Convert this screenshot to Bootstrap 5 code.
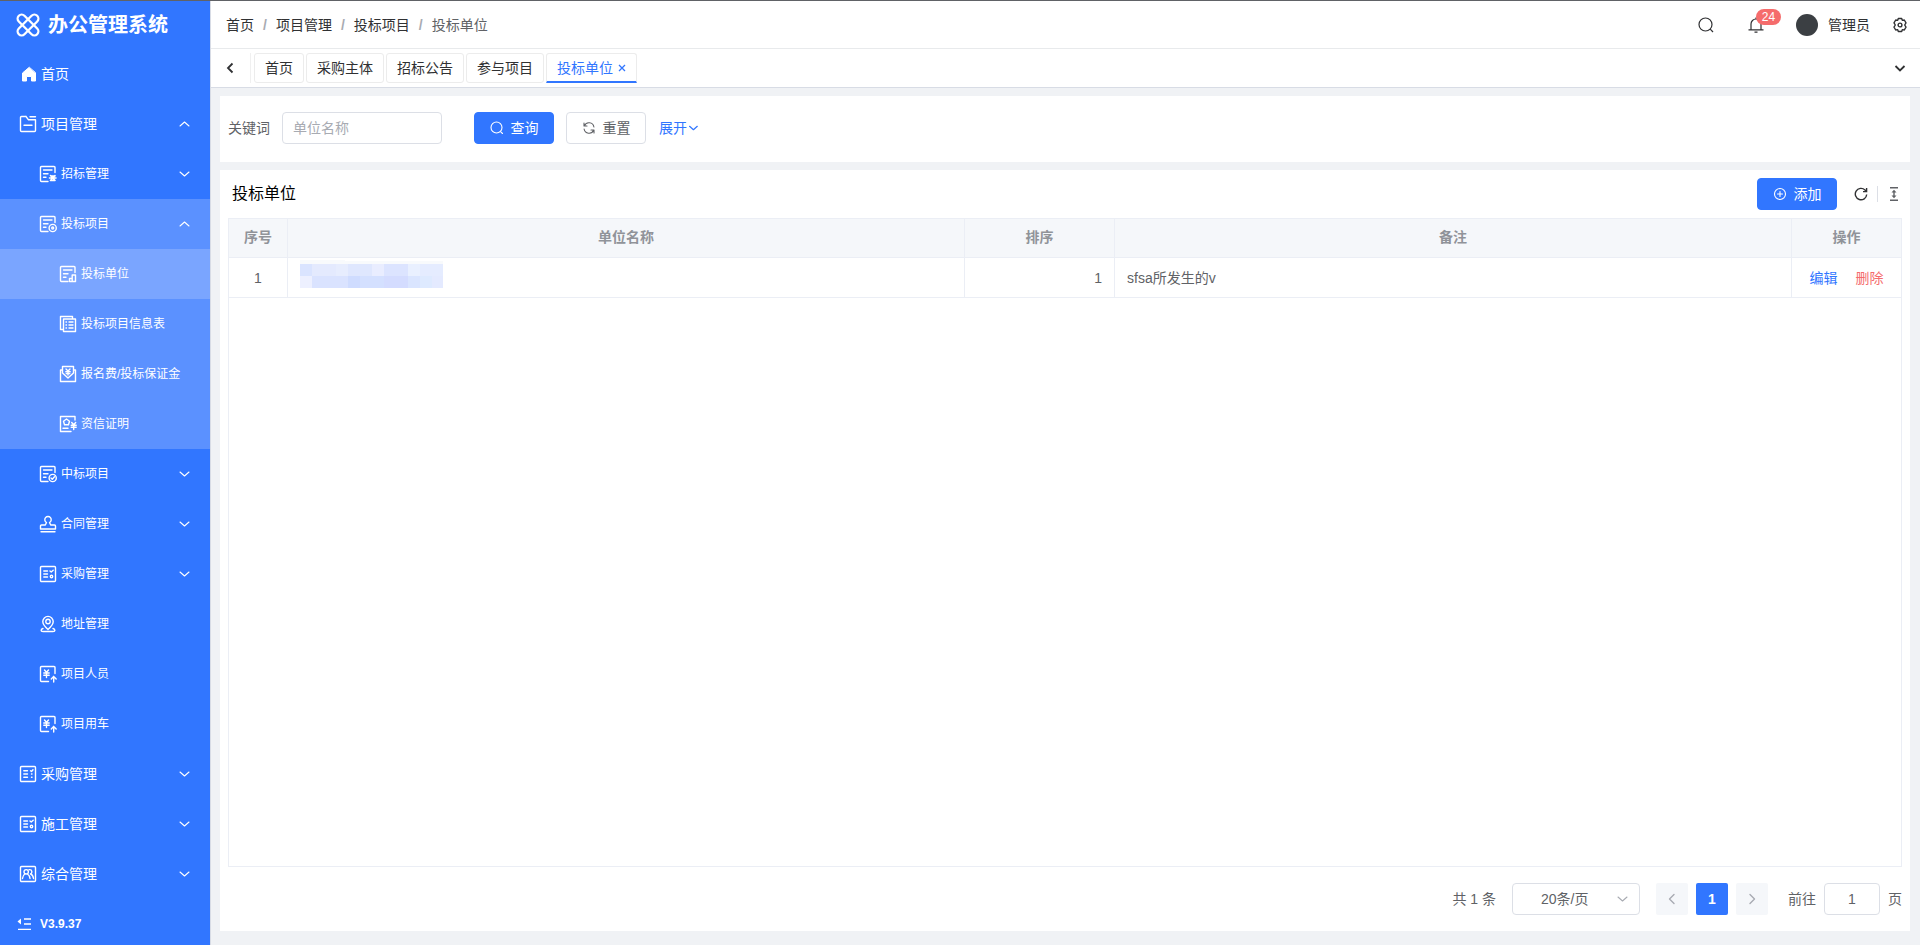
<!DOCTYPE html>
<html lang="zh-CN">
<head>
<meta charset="utf-8">
<meta name="viewport" content="width=device-width, initial-scale=1">
<title>办公管理系统</title>
<link rel="stylesheet" href="https://cdn.jsdelivr.net/npm/bootstrap@5.3.0/dist/css/bootstrap.min.css">
<style>
:root { --brand: #3176ff; --line: #ebeef5; --ink: #303133; --text: #606266; --field: #dcdfe6; }
body { font-family: "Liberation Sans", "Noto Sans CJK SC", sans-serif; font-size: 14px; line-height: 20px; color: var(--text); background: #f0f2f5; border-top: 1px solid #606266; }
a { text-decoration: none; }
svg { display: block; flex: none; }
.ico { width: 18px; height: 18px; fill: none; stroke: currentColor; stroke-width: 1.4; stroke-linecap: round; stroke-linejoin: round; }
.ico-sm { width: 14px; height: 14px; stroke-width: 1.1; }
.app { min-height: calc(100vh - 1px); }
.sidebar { width: 211px; background: var(--brand); border-right: 1px solid #d8dce5; color: #fff; }
.sidebar a { color: #fff; height: 50px; gap: 4px; padding: 0 19px; }
.brand-row { height: 48px; padding: 0 16px; gap: 8px; }
.brand-row h1 { font-size: 20px; line-height: 24px; }
.sidebar ul ul a { padding-left: 39px; font-size: 12px; }
.sidebar ul ul ul a { padding-left: 59px; }
.branch-open { background: #5b91ff; }
.sidebar a.current { background: #7aa5ff; }
.version { font-size: 12px; height: 46px; padding: 4px 17px 0; gap: 9px; font-weight: bold; }
.topbar { height: 48px; padding: 0 15px; border-bottom: 1px solid #e8eaec; color: var(--ink); }
.breadcrumb { --bs-breadcrumb-item-padding-x: 9px; --bs-breadcrumb-divider-color: #a8abb2; --bs-breadcrumb-item-active-color: #606266; font-size: 14px; }
.breadcrumb a, .topbar button { color: var(--ink); }
.breadcrumb-item + .breadcrumb-item::before { font-weight: bold; }
.plain { border: 0; background: none; padding: 0; color: inherit; }
.notify { margin-left: 34px; }
.settings { margin-left: 22px; margin-right: -3px; }
.count { top: -8px; left: 8px; height: 16px; min-width: 25px; border-radius: 8px; background: #f56c6c; font-size: 12px; line-height: 16px; color: #fff; text-align: center; }
.avatar { width: 22px; height: 22px; border-radius: 50%; background: #3b3f43; margin-left: 32px; margin-right: 10px; }
.tabbar { height: 39px; border-bottom: 1px solid #d8dce5; padding: 0 14px 0 13px; color: var(--ink); }
.tab-edge { width: 1px; height: 30px; background: #f0f0f0; margin-left: 14px; margin-right: 3px; }
.tab-list { gap: 2px; }
.tabbar a { height: 30px; padding: 0 10px; border: 1px solid #ececec; border-radius: 3px; color: var(--ink); line-height: 28px; }
.tabbar a.current { color: var(--brand); border-bottom: 2px solid var(--brand); border-radius: 3px 3px 0 0; gap: 5px; }
.page-main { padding: 8px 10px 14px 9px; gap: 8px; }
.search-panel { padding: 16px 8px 18px; }
.box { height: 32px; border: 1px solid var(--field); border-radius: 4px; color: var(--text); background: #fff; font-size: 14px; line-height: 20px; }
input.box::placeholder { color: #a8abb2; }
.keyword { width: 160px; padding: 0 10px; margin-left: 12px; margin-right: 32px; }
.act { width: 80px; height: 32px; padding: 0; border-radius: 4px; font-size: 14px; gap: 7px; }
.act-brand { --bs-btn-bg: #3176ff; --bs-btn-border-color: #3176ff; }
.act-light { --bs-btn-bg: #fff; --bs-btn-border-color: #dcdfe6; --bs-btn-color: #606266; margin-left: 12px; margin-right: 13px; }
.link-brand { color: var(--brand); }
.more { width: 12px; height: 12px; }
.list-panel { padding: 8px 8px 16px; }
.list-panel h2 { font-size: 16px; line-height: 24px; color: #000; padding-left: 4px; font-weight: 400; }
.reload { margin-left: 17px; }
.tool-line { width: 1px; height: 16px; background: var(--field); margin: 0 11px 0 9px; }
.density { margin-right: 3px; }
.grid-wrap { margin-top: 8px; border: 1px solid var(--line); }
.grid-table { width: 100%; table-layout: fixed; border-collapse: separate; border-spacing: 0; }
.grid-table th, .grid-table td { border: 0 solid var(--line); border-width: 0 1px 1px 0; padding: 0 12px; }
.grid-table th { height: 39px; padding-bottom: 2px; background: #f5f7fa; color: #909399; text-align: center; }
.grid-table td { height: 40px; }
.grid-table tr > :last-child { border-right: 0; }
.col-no { width: 59px; } .col-sort { width: 150px; } .col-op { width: 109px; }
.masked { margin-bottom: 8px; }
.ops { gap: 18px; }
.del { color: #f56c6c; }
.pager { margin-top: 16px; }
.page-size { width: 128px; padding: 0 38px 0 28px; appearance: none; }
.size-arrow { margin-right: 11px; color: #a8abb2; }
.pg { width: 32px; height: 32px; border: 0; border-radius: 2px; background: #f5f7fa; color: #a8abb2; padding: 0; }
.pg-on { background: var(--brand); color: #fff; font-weight: bold; }
.jump-label { margin-left: 20px; }
.jump { width: 56px; text-align: center; }
</style>
</head>
<body>
<svg class="d-none" aria-hidden="true">
  <symbol id="down" viewBox="0 0 14 14"><path d="M3 5l4.500 4L12 5"/></symbol>
  <symbol id="up" viewBox="0 0 14 14"><path d="M3 9l4.500-4L12 9"/></symbol>
  <symbol id="doc" viewBox="0 0 18 18"><path d="M16 7.500V2.500a1 1 0 0 0-1-1H2.500a1 1 0 0 0-1 1v13a1 1 0 0 0 1 1H9M4.500 5h8.500M4.500 8.700h4.500M4.500 12.300h2.500"/></symbol>
  <symbol id="yen" viewBox="0 0 18 18"><path d="M16 8.500V2.500a1 1 0 0 0-1-1H2.500a1 1 0 0 0-1 1v13a1 1 0 0 0 1 1h7M5.500 5l2 2.300 2-2.300M7.500 7.500v5M4.800 8h5.400M4.800 10.300h5.400M14.700 17v-5.500M12.300 14l2.400-2.600 2.500 2.600"/></symbol>
  <symbol id="check" viewBox="0 0 18 18"><rect x="1.500" y="1.500" width="15" height="15" rx="1"/><path d="M4.800 6h3.700M4.800 9h3.700M4.800 12h3.700M11 6l1.200 1 2-1.800"/><circle cx="12.500" cy="11.500" r="1.200"/></symbol>
</svg>
<div class="app d-flex">
  <aside class="sidebar d-flex flex-column flex-shrink-0">
    <div class="brand-row d-flex align-items-center">
      <svg width="24" height="24" viewBox="0 0 24 24" fill="none" stroke="#fff" stroke-width="2.300"><rect x="-1" y="8" width="26" height="8" rx="4" transform="rotate(45 12 12)"/><rect x="-1" y="8" width="26" height="8" rx="4" transform="rotate(-45 12 12)"/></svg>
      <h1 class="m-0 fw-bold">办公管理系统</h1>
    </div>
    <nav class="flex-grow-1">
      <ul class="list-unstyled m-0">
        <li><a href="#" class="d-flex align-items-center"><svg class="ico" viewBox="0 0 18 18"><path d="M10 2.500L3.500 8v8h4v-4.500h5V16h4V8z" fill="currentColor" stroke-width="1"/></svg>首页</a></li>
        <li><a href="#" class="d-flex align-items-center"><svg class="ico" viewBox="0 0 18 18"><path d="M7 1.500H2.500a1 1 0 0 0-1 1v13a1 1 0 0 0 1 1h13a1 1 0 0 0 1-1V4.800H9.500L7 1.500M11 1.800h5.500M5 10.200h8"/></svg>项目管理<svg class="ico ico-sm ms-auto"><use href="#up"/></svg></a>
          <ul class="list-unstyled">
            <li><a href="#" class="d-flex align-items-center"><svg class="ico" viewBox="0 0 18 18"><use href="#doc"/><path d="M11.500 10.500l4.500 5M16 10.500l-4.500 5M10.500 13h6.500M12 11h4M12 15.500h4" stroke-width="1.600"/></svg>招标管理<svg class="ico ico-sm ms-auto"><use href="#down"/></svg></a></li>
            <li class="branch-open"><a href="#" class="d-flex align-items-center"><svg class="ico" viewBox="0 0 18 18"><use href="#doc"/><circle cx="13.700" cy="13" r="3.600"/><circle cx="13.700" cy="13" r="1"/></svg>投标项目<svg class="ico ico-sm ms-auto"><use href="#up"/></svg></a>
              <ul class="list-unstyled">
                <li><a href="#" class="current d-flex align-items-center"><svg class="ico" viewBox="0 0 18 18"><use href="#doc"/><path d="M10.500 16.500v-3h2.700v3zM13.200 16.500V10h3.300v6.500z"/></svg>投标单位</a></li>
                <li><a href="#" class="d-flex align-items-center"><svg class="ico" viewBox="0 0 18 18"><path d="M4.500 4h12v12.500h-12zM4 14.500H1.500v-13h12V4M7 7h.500M10 7h4M7 10h.500M10 10h4M7 13h.500M10 13h4"/></svg>投标项目信息表</a></li>
                <li><a href="#" class="d-flex align-items-center"><svg class="ico" viewBox="0 0 18 18"><path d="M3.500 5h-2v11.500h15V5h-2M3.500 8V1.500h11V8L9 13 3.500 8M7 4l2 2 2-2M9 6v4M6.800 6.700h4.400M7.200 8.600h3.600"/></svg>报名费/投标保证金</a></li>
                <li><a href="#" class="d-flex align-items-center"><svg class="ico" viewBox="0 0 18 18"><path d="M16 5V1.500H1.500v15H12M4 13.200h5M7.500 4l3 2.200-1 3.600h-4l-1-3.600zM12.700 7.500l2 2.300 2-2.300M14.700 10v4.500M12.200 10.300h5M12.200 12.300h5"/></svg>资信证明</a></li>
              </ul>
            </li>
            <li><a href="#" class="d-flex align-items-center"><svg class="ico" viewBox="0 0 18 18"><use href="#doc"/><circle cx="13.700" cy="13" r="3.600"/><path d="M12 13l1.300 1.200 2.200-2.400"/></svg>中标项目<svg class="ico ico-sm ms-auto"><use href="#down"/></svg></a></li>
            <li><a href="#" class="d-flex align-items-center"><svg class="ico" viewBox="0 0 18 18"><path d="M7.500 7.500a3.200 3.200 0 1 1 3 0l1.200 2.500h3.800a1 1 0 0 1 1 1v3h-15v-3a1 1 0 0 1 1-1h3.800zM2 16.700h14"/></svg>合同管理<svg class="ico ico-sm ms-auto"><use href="#down"/></svg></a></li>
            <li><a href="#" class="d-flex align-items-center"><svg class="ico"><use href="#check"/></svg>采购管理<svg class="ico ico-sm ms-auto"><use href="#down"/></svg></a></li>
            <li><a href="#" class="d-flex align-items-center"><svg class="ico" viewBox="0 0 18 18"><path d="M9 14.500C5.500 11.500 3.800 9 3.800 6.600a5.200 5.200 0 0 1 10.400 0c0 2.400-1.700 4.900-5.200 7.900zM4 13.500c-2.500 1-2.500 3 0 3h10c2.500 0 2.500-2 0-3"/><circle cx="9" cy="6.500" r="2.200"/></svg>地址管理</a></li>
            <li><a href="#" class="d-flex align-items-center"><svg class="ico"><use href="#yen"/></svg>项目人员</a></li>
            <li><a href="#" class="d-flex align-items-center"><svg class="ico"><use href="#yen"/></svg>项目用车</a></li>
          </ul>
        </li>
        <li><a href="#" class="d-flex align-items-center"><svg class="ico" viewBox="0 0 18 18"><rect x="1.500" y="1.500" width="15" height="15" rx="1"/><path d="M4.800 5.800h3.700M4.800 9h3.700M4.800 12.200h3.700M11.500 5.800l1 .700 1.500-1.700M12.500 9h.500M12.500 12.200h.500"/></svg>采购管理<svg class="ico ico-sm ms-auto"><use href="#down"/></svg></a></li>
        <li><a href="#" class="d-flex align-items-center"><svg class="ico"><use href="#check"/></svg>施工管理<svg class="ico ico-sm ms-auto"><use href="#down"/></svg></a></li>
        <li><a href="#" class="d-flex align-items-center"><svg class="ico" viewBox="0 0 18 18"><rect x="1.500" y="1.500" width="15" height="15" rx="1"/><circle cx="7.200" cy="6.800" r="2.200"/><path d="M3.500 13.500c.200-2.500 1.500-4 2.500-4.700M8.500 9c1.200.800 2.200 2.200 2.500 4.500M10 4.700c3.500-.500 3.500 3.300 1.500 4.300 2 .500 2.700 2 3 4.500"/></svg>综合管理<svg class="ico ico-sm ms-auto"><use href="#down"/></svg></a></li>
      </ul>
    </nav>
    <div class="version d-flex align-items-center"><svg width="14" height="14" viewBox="0 0 14 14" stroke="#fff" stroke-width="1.300"><path d="M7 2h7M7 7h7M1 12.300h13"/><path d="M4 1.500v6L0.500 4.500z" fill="#fff" stroke="none"/></svg>V3.9.37</div>
  </aside>

  <div class="flex-grow-1 d-flex flex-column">
    <header class="topbar bg-white d-flex align-items-center">
      <nav aria-label="breadcrumb">
        <ol class="breadcrumb m-0">
          <li class="breadcrumb-item"><a href="#">首页</a></li>
          <li class="breadcrumb-item"><a href="#">项目管理</a></li>
          <li class="breadcrumb-item"><a href="#">投标项目</a></li>
          <li class="breadcrumb-item active" aria-current="page">投标单位</li>
        </ol>
      </nav>
      <button class="plain ms-auto" aria-label="搜索"><svg width="16" height="16" viewBox="0 0 16 16" fill="none" stroke="currentColor" stroke-width="1.200"><circle cx="7.500" cy="7.500" r="6.500"/><path d="M12.200 12.200L15 15"/></svg></button>
      <button class="plain position-relative notify" aria-label="通知"><svg width="16" height="16" viewBox="0 0 16 16" fill="none" stroke="currentColor" stroke-width="1.200"><path d="M3 12.500V7a5 5 0 0 1 10 0v5.500M.500 12.900h15M6.500 15.200h3M8 2V.500"/></svg><span class="count position-absolute">24</span></button>
      <span class="avatar"></span><span>管理员</span>
      <button class="plain settings" aria-label="设置"><svg width="16" height="16" viewBox="0 0 16 16" fill="none" stroke="currentColor" stroke-width="1.400" stroke-linejoin="round"><path d="M6.300 1.500h3.400l.6 1.900 2-.4L14 5.900 12.700 8l1.300 2.100-1.700 2.900-2-.4-.6 1.900H6.300l-.6-1.900-2 .4L2 10.100 3.300 8 2 5.900 3.700 3l2 .4z"/><circle cx="8" cy="8" r="1.900"/></svg></button>
    </header>
    <nav class="tabbar bg-white d-flex align-items-center">
      <button class="plain" aria-label="向左"><svg width="12" height="12" viewBox="0 0 12 12" fill="none" stroke="currentColor" stroke-width="1.800"><path d="M8.500 1.500L4 6l4.500 4.500"/></svg></button>
      <span class="tab-edge"></span>
      <div class="d-flex tab-list">
        <a href="#">首页</a><a href="#">采购主体</a><a href="#">招标公告</a><a href="#">参与项目</a>
        <a href="#" class="current d-flex align-items-center">投标单位<svg width="8" height="8" viewBox="0 0 8 8" stroke="currentColor" stroke-width="1.300"><path d="M1 1l6 6M7 1L1 7"/></svg></a>
      </div>
      <button class="plain ms-auto" aria-label="更多标签"><svg width="12" height="12" viewBox="0 0 12 12" fill="none" stroke="currentColor" stroke-width="1.800"><path d="M1.500 4L6 8.500 10.500 4"/></svg></button>
    </nav>

    <main class="page-main flex-grow-1 d-flex flex-column">
      <form class="search-panel bg-white d-flex align-items-center">
        <label for="kw">关键词</label>
        <input id="kw" class="box keyword" type="text" placeholder="单位名称">
        <button type="button" class="act act-brand btn btn-primary d-flex align-items-center justify-content-center"><svg class="ico ico-sm" viewBox="0 0 14 14"><circle cx="6.500" cy="6.500" r="5.500"/><path d="M10.800 10.800L12.500 12.500"/></svg>查询</button>
        <button type="reset" class="act act-light btn d-flex align-items-center justify-content-center"><svg class="ico ico-sm" viewBox="0 0 14 14"><path d="M2 5V2M2 5h3M2.300 5A5 5 0 0 1 11.900 6M12 9v3M12 9H9M11.700 9A5 5 0 0 1 2.100 8"/></svg>重置</button>
        <a href="#" class="link-brand d-flex align-items-center">展开<svg class="ico more" viewBox="0 0 14 14"><use href="#down"/></svg></a>
      </form>

      <section class="list-panel bg-white flex-grow-1 d-flex flex-column">
        <div class="d-flex align-items-center">
          <h2 class="m-0 me-auto">投标单位</h2>
          <button type="button" class="act act-brand btn btn-primary d-flex align-items-center justify-content-center"><svg class="ico ico-sm" viewBox="0 0 14 14"><circle cx="7" cy="7" r="5.500"/><path d="M4.500 7h5M7 4.500v5"/></svg>添加</button>
          <button class="plain reload" aria-label="刷新"><svg width="14" height="14" viewBox="0 0 14 14" fill="none" stroke="#303133" stroke-width="1.400"><path d="M12.700 7.500A5.700 5.700 0 1 1 11 3l1.300 1.300M12.600 1v3.600H9"/></svg></button>
          <span class="tool-line"></span>
          <button class="plain density" aria-label="密度"><svg width="10" height="14" viewBox="0 0 10 14" fill="none" stroke="#606266" stroke-width="1.400"><path d="M1 .700h8M1 13.300h8M5 4v6"/><path d="M2.500 5.500L5 2.700l2.500 2.800zM2.500 8.500L5 11.300l2.500-2.800z" fill="#606266" stroke="none"/></svg></button>
        </div>
        <div class="grid-wrap flex-grow-1">
          <table class="grid-table">
            <colgroup><col class="col-no"><col><col class="col-sort"><col><col class="col-op"></colgroup>
            <thead><tr><th>序号</th><th>单位名称</th><th>排序</th><th>备注</th><th>操作</th></tr></thead>
            <tbody><tr>
              <td class="text-center">1</td>
              <td><svg class="masked" width="143" height="28" viewBox="0 0 143 28" shape-rendering="crispEdges">
                <path fill="#f8fafc" d="M0 0h45v1h98v3H0z"/>
                <path fill="#dae4ff" d="M0 4h12v12H0z"/><path fill="#e4eafe" d="M12 4h24v12H12z"/><path fill="#e7edfe" d="M36 4h12v12H36z"/><path fill="#dfe7fe" d="M48 4h24v12H48z"/><path fill="#e9edff" d="M72 4h12v12H72z"/><path fill="#dce4ff" d="M84 4h24v12H84z"/><path fill="#e9f0ff" d="M108 4h12v12h-12z"/><path fill="#e5ecff" d="M120 4h23v12h-23z"/>
                <path fill="#edf0ff" d="M0 16h12v12H0z"/><path fill="#dae3ff" d="M12 16h36v12H12z"/><path fill="#cfdcff" d="M48 16h12v12H48z"/><path fill="#d4e0ff" d="M60 16h24v12H60z"/><path fill="#d4dcff" d="M84 16h24v12H84z"/><path fill="#dae5ff" d="M108 16h12v12h-12z"/><path fill="#deeaff" d="M120 16h12v12h-12z"/><path fill="#e4eaff" d="M132 16h11v12h-11z"/>
              </svg></td>
              <td class="text-end">1</td>
              <td>sfsa所发生的v</td>
              <td><div class="ops d-flex justify-content-center"><a href="#" class="link-brand">编辑</a><a href="#" class="del">删除</a></div></td>
            </tr></tbody>
          </table>
        </div>
        <div class="pager d-flex align-items-center justify-content-end">
          <span class="me-3">共 1 条</span>
          <div class="position-relative me-3">
            <select class="box page-size" aria-label="每页条数"><option>20条/页</option></select>
            <svg class="ico ico-sm position-absolute top-50 end-0 translate-middle-y size-arrow"><use href="#down"/></svg>
          </div>
          <div class="d-flex gap-2">
            <button class="pg d-flex align-items-center justify-content-center" aria-label="上一页"><svg class="ico" viewBox="0 0 18 18"><path d="M11 4.500L6.500 9l4.500 4.500"/></svg></button>
            <button class="pg pg-on">1</button>
            <button class="pg d-flex align-items-center justify-content-center" aria-label="下一页"><svg class="ico" viewBox="0 0 18 18"><path d="M7 4.500L11.500 9 7 13.500"/></svg></button>
          </div>
          <label for="jump" class="jump-label">前往</label>
          <input id="jump" class="box jump mx-2" type="text" value="1">
          <span>页</span>
        </div>
      </section>
    </main>
  </div>
</div>
<script src="https://cdn.jsdelivr.net/npm/bootstrap@5.3.0/dist/js/bootstrap.bundle.min.js"></script>
</body>
</html>
